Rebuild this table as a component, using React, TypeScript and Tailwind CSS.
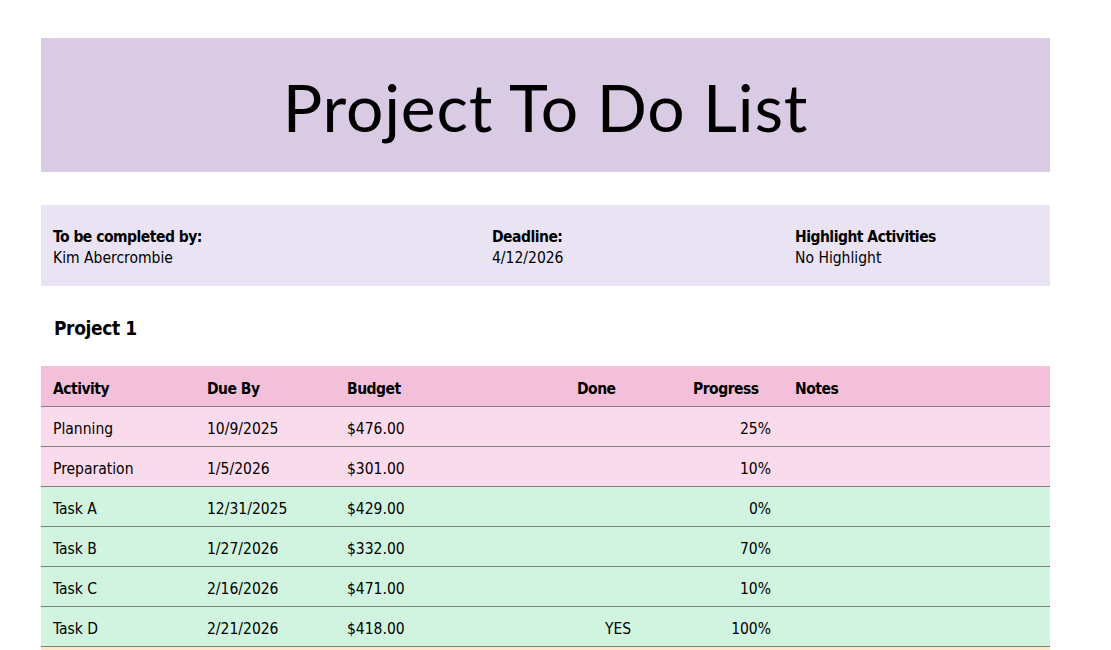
const rows = [
  { activity: "Planning", due: "10/9/2025", budget: "$476.00", done: "", progress: "25%", tone: "pink" },
  { activity: "Preparation", due: "1/5/2026", budget: "$301.00", done: "", progress: "10%", tone: "pink" },
  { activity: "Task A", due: "12/31/2025", budget: "$429.00", done: "", progress: "0%", tone: "green" },
  { activity: "Task B", due: "1/27/2026", budget: "$332.00", done: "", progress: "70%", tone: "green" },
  { activity: "Task C", due: "2/16/2026", budget: "$471.00", done: "", progress: "10%", tone: "green" },
  { activity: "Task D", due: "2/21/2026", budget: "$418.00", done: "YES", progress: "100%", tone: "green" },
  { activity: "", due: "", budget: "", done: "", progress: "", tone: "yellow" },
];

const toneClass: Record<string, string> = {
  pink: "bg-[#fadbec]",
  green: "bg-[#d1f4e0]",
  yellow: "bg-[#fde7c7]",
};

const cols = "grid grid-cols-[154px_140px_230px_116px_102px_1fr]";

export default function App() {
  return (
    <main
      className="min-h-screen bg-white text-black pt-[38px] pl-[41px]"
      style={{ fontFamily: '"DejaVu Sans Condensed", "DejaVu Sans", sans-serif' }}
    >
      <div className="w-[1009px]">
        <header className="h-[134px] bg-[#d9cbe4] flex items-center justify-center">
          <h1 className="text-[66px] leading-none tracking-[0.8px] pt-[4px] font-['Lato',sans-serif]">
            Project To Do List
          </h1>
        </header>

        <section className="mt-[33px] h-[81px] bg-[#e9e3f3] grid grid-cols-[439px_303px_1fr] items-center text-[15.5px] leading-[21px]">
          <div className="pl-3 pt-1">
            <div className="font-bold tracking-[-0.5px]">To be completed by:</div>
            <div>Kim Abercrombie</div>
          </div>
          <div className="pl-3 pt-1">
            <div className="font-bold tracking-[-0.5px]">Deadline:</div>
            <div>4/12/2026</div>
          </div>
          <div className="pl-3 pt-1">
            <div className="font-bold tracking-[-0.5px]">Highlight Activities</div>
            <div>No Highlight</div>
          </div>
        </section>

        <h2 className="mt-[29px] pl-[13px] text-[19px] font-bold tracking-[-0.4px] leading-[26px]">Project 1</h2>

        <div className="mt-[25px] text-[15.5px]">
          <div className={`${cols} h-[41px] bg-[#f3bfd9] border-b border-[#7f7f7f] items-center font-bold tracking-[-0.5px] pt-[8px]`}>
            <div className="pl-3">Activity</div>
            <div className="pl-3">Due By</div>
            <div className="pl-3">Budget</div>
            <div className="pl-3">Done</div>
            <div className="pl-3">Progress</div>
            <div className="pl-3">Notes</div>
          </div>
          {rows.map((r, i) => (
            <div
              key={i}
              className={`${cols} h-[40px] ${toneClass[r.tone]} border-b border-[#7f7f7f] items-center pt-[7px]`}
            >
              <div className="pl-3">{r.activity}</div>
              <div className="pl-3">{r.due}</div>
              <div className="pl-3">{r.budget}</div>
              <div className="pl-[40px]">{r.done}</div>
              <div className="pr-3 text-right">{r.progress}</div>
              <div className="pl-3"></div>
            </div>
          ))}
        </div>
      </div>
    </main>
  );
}
